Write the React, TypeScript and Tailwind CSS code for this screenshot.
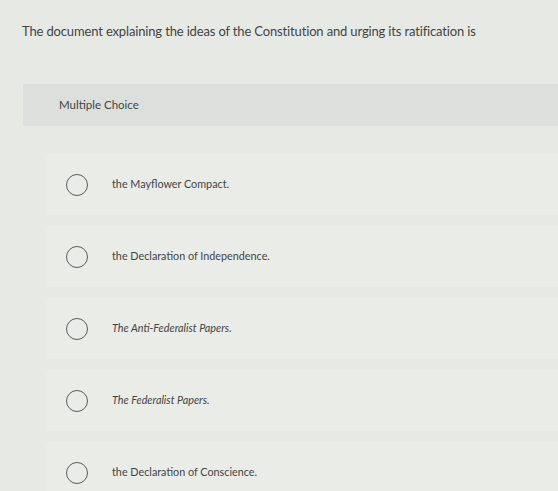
const options = [
  { label: 'the Mayflower Compact.', italic: false },
  { label: 'the Declaration of Independence.', italic: false },
  { label: 'The Anti-Federalist Papers.', italic: true },
  { label: 'The Federalist Papers.', italic: true },
  { label: 'the Declaration of Conscience.', italic: false },
]

export default function App() {
  return (
    <div
      className="w-[558px] h-[491px] overflow-hidden bg-[#e7e9e5] text-[#434544]"
      style={{ fontFamily: 'Lato, "Open Sans", sans-serif' }}
    >
      <p className="pl-[22px] pt-[22px] text-[13px] leading-[18px] tracking-[-0.15px]">
        The document explaining the ideas of the Constitution and urging its ratification is
      </p>

      <div className="mt-[44px] ml-[23px] h-[42px] flex items-center pl-[36px] bg-[#dcdfdb] text-[11.5px]">
        Multiple Choice
      </div>

      <div className="ml-[46px] mt-[28px] flex flex-col gap-[11px]">
        {options.map((o) => (
          <div key={o.label} className="h-[61px] flex items-center bg-[#eaece8]">
            <span className="ml-[20px] w-[22px] h-[22px] rounded-full border-[1.5px] border-[#5b5d5c] shrink-0" />
            <span className={`ml-[24px] text-[10.8px] ${o.italic ? 'italic' : ''}`}>{o.label}</span>
          </div>
        ))}
      </div>
    </div>
  )
}
